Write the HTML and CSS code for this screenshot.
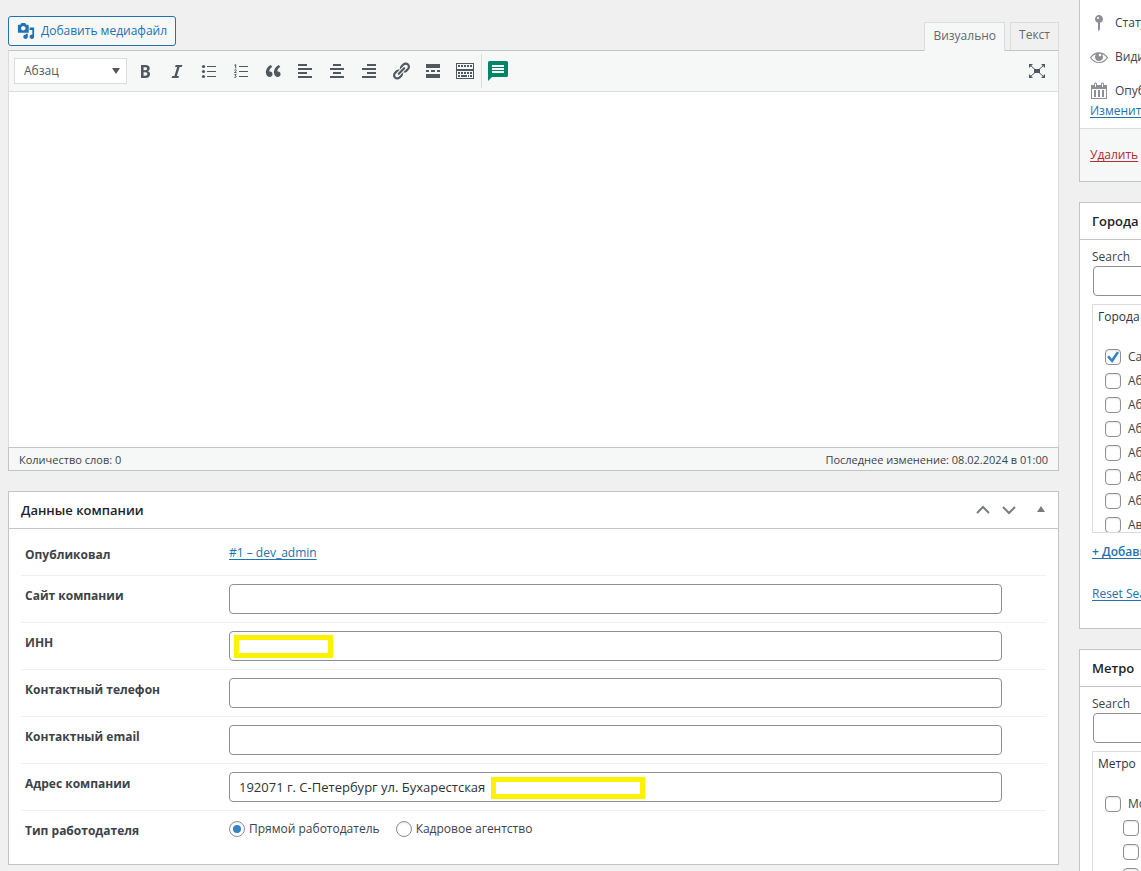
FILE: index.html
```html
<!DOCTYPE html>
<html lang="ru">
<head>
<meta charset="utf-8">
<meta name="viewport" content="width=device-width, initial-scale=1">
<title>Данные компании</title>
<link rel="stylesheet" href="styles.css">
</head>
<body>
<div class="page">
  <main class="main">
    <section class="editor">
      <div class="editor-tools">
        <button type="button" class="media-button">
          <svg class="media-icon" viewBox="0 0 20 20" aria-hidden="true"><path d="M13 11V4c0-.55-.45-1-1-1h-1.67L9 1H5L3.67 3H2c-.55 0-1 .45-1 1v7c0 .55.45 1 1 1h10c.55 0 1-.45 1-1zM7 4.5c1.38 0 2.5 1.12 2.5 2.5S8.38 9.5 7 9.5 4.5 8.38 4.5 7 5.62 4.5 7 4.5zM14 6h5v10.5c0 1.38-1.12 2.5-2.5 2.5S14 17.88 14 16.5s1.12-2.5 2.5-2.5c.17 0 .34.02.5.05V9h-3V6zm-4 8.05V13h2v3.5c0 1.38-1.12 2.5-2.5 2.5S7 17.88 7 16.5 8.12 14 9.5 14c.17 0 .34.02.5.05z"/></svg>
          <span>Добавить медиафайл</span>
        </button>
        <div class="tabs">
          <button type="button" class="tab tab-active">Визуально</button>
          <button type="button" class="tab">Текст</button>
        </div>
      </div>
      <div class="editor-box">
        <div class="toolbar">
          <div class="format">
            <select class="format-select" aria-label="Формат"><option>Абзац</option></select>
            <svg class="format-arrow" viewBox="0 0 8 6" aria-hidden="true"><path d="M0 0h8L4 6z"/></svg>
          </div>
          <button type="button" class="tool" aria-label="Жирный"><svg viewBox="0 0 20 20"><path d="M6 4v13h4.54c1.37 0 2.46-.33 3.26-1 .8-.66 1.2-1.58 1.2-2.77 0-.84-.17-1.51-.51-2.01s-.9-.85-1.67-1.03v-.09c.57-.1 1.02-.4 1.36-.9s.51-1.13.51-1.91c0-1.14-.39-1.98-1.17-2.5C12.75 4.26 11.5 4 9.78 4H6zm2.57 5.15V6.26h1.36c.73 0 1.27.11 1.61.32.34.22.51.58.51 1.07 0 .54-.16.92-.47 1.15s-.82.35-1.51.35h-1.5zm0 2.19h1.6c1.44 0 2.16.53 2.16 1.61 0 .6-.17 1.05-.51 1.34s-.86.43-1.57.43H8.57v-3.38z"/></svg></button>
          <button type="button" class="tool" aria-label="Курсив"><svg viewBox="0 0 20 20"><path d="M14.78 6h-2.13l-2.8 9h2.12l-.62 2H4.6l.62-2h2.14l2.8-9H8.03l.62-2h6.75z"/></svg></button>
          <button type="button" class="tool" aria-label="Маркированный список"><svg viewBox="0 0 20 20"><circle cx="4.5" cy="5.5" r="1.6"/><circle cx="4.5" cy="10.5" r="1.6"/><circle cx="4.5" cy="15.5" r="1.6"/><path d="M8 5h9v1H8zM8 10h9v1H8zM8 15h9v1H8z"/></svg></button>
          <button type="button" class="tool" aria-label="Нумерованный список"><svg viewBox="0 0 20 20"><path d="M8 5h9v1H8zM8 10h9v1H8zM8 15h9v1H8z"/><path class="line" d="M3.5 4.3l1.2-.8v4M3.4 9.2c.6-.8 2-.6 1.9.3 0 .7-1 1.2-1.8 2.1h2M3.4 13.6h1.8l-1 1.2c1.700 0 1.500 2-.8 1.700"/></svg></button>
          <button type="button" class="tool" aria-label="Цитата"><svg viewBox="0 0 20 20"><path d="M9.490 13.220c0-.74-.2-1.38-.61-1.9-.62-.78-1.83-.88-2.53-.72-.29-1.65 1.110-3.75 2.920-4.650L7.880 4c-2.730 1.300-5.420 4.280-4.960 8.050C3.210 14.430 4.590 16 6.540 16c.85 0 1.560-.25 2.120-.75s.83-1.180.83-2.030zm8.050 0c0-.74-.2-1.380-.61-1.900-.63-.78-1.830-.88-2.530-.72-.29-1.650 1.110-3.750 2.920-4.650L15.930 4c-2.730 1.300-5.410 4.280-4.950 8.050.29 2.380 1.660 3.950 3.610 3.950.85 0 1.560-.25 2.120-.75s.83-1.180.83-2.030z"/></svg></button>
          <button type="button" class="tool" aria-label="По левому краю"><svg viewBox="0 0 20 20"><path d="M3 3h9v2H3zM3 7h14v2H3zM3 11h9v2H3zM3 15h14v2H3z"/></svg></button>
          <button type="button" class="tool" aria-label="По центру"><svg viewBox="0 0 20 20"><path d="M6 3h8v2H6zM3 7h14v2H3zM6 11h8v2H6zM3 15h14v2H3z"/></svg></button>
          <button type="button" class="tool" aria-label="По правому краю"><svg viewBox="0 0 20 20"><path d="M8 3h9v2H8zM3 7h14v2H3zM8 11h9v2H8zM3 15h14v2H3z"/></svg></button>
          <button type="button" class="tool" aria-label="Ссылка"><svg viewBox="0 0 20 20"><path d="M17.740 2.760c1.680 1.690 1.680 4.410 0 6.100l-1.530 1.520c-1.120 1.120-2.700 1.470-4.140 1.090l2.620-2.610.76-.77.76-.76c.84-.84.84-2.200 0-3.040-.84-.85-2.200-.85-3.040 0l-.77.76-3.380 3.380c-.37-1.440-.02-3.020 1.100-4.140l1.520-1.530c1.690-1.680 4.420-1.680 6.100 0zM8.590 13.430l5.340-5.340c.42-.42.42-1.100 0-1.520-.44-.43-1.130-.39-1.530 0l-5.330 5.340c-.42.42-.42 1.100 0 1.520.44.43 1.130.39 1.520 0zm-.76 2.290l4.140-4.150c.38 1.440.03 3.020-1.090 4.140l-1.520 1.530c-1.690 1.680-4.410 1.680-6.100 0-1.680-1.680-1.680-4.420 0-6.100l1.530-1.520c1.120-1.120 2.700-1.470 4.140-1.100l-4.140 4.150c-.85.84-.85 2.200 0 3.050.84.84 2.200.84 3.040 0z"/></svg></button>
          <button type="button" class="tool" aria-label="Тег «Далее»"><svg viewBox="0 0 20 20"><path d="M3 3h14v4H3zM3 9h3v2H3zM8 9h4v2H8zM14 9h3v2h-3zM3 13h14v4H3z"/></svg></button>
          <button type="button" class="tool" aria-label="Дополнительная панель"><svg viewBox="0 0 20 20"><path fill-rule="evenodd" d="M1 2h18v7H1zM2 3v5h16V3zM1 9h18v9H1zM2 10v7h16v-7z"/><path d="M3 4h2v2H3zM6 4h2v2H6zM9 4h2v2H9zM12 4h2v2h-2zM15 4h2v2h-2zM3 11h2v2H3zM6 11h2v2H6zM9 11h2v2H9zM12 11h2v2h-2zM15 11h2v2h-2zM3 14h2v2H3zM6 14h6v2H6zM13 14h1v2h-1zM15 14h2v2h-2z"/></svg></button>
          <span class="tool-divider"></span>
          <button type="button" class="tool tool-green" aria-label="Комментарий"><svg viewBox="0 0 20 20"><path fill-rule="evenodd" d="M1.500 0h17A1.500 1.500 0 0 1 20 1.500v13a1.500 1.500 0 0 1-1.500 1.500H4l-4 4V1.500A1.500 1.500 0 0 1 1.500 0zM4 4v2h12V4zM4 7v2h12V7zM4 10v2h12v-2z"/></svg></button>
          <button type="button" class="tool tool-last" aria-label="На весь экран"><svg viewBox="0 0 20 20"><path d="M7 8h6v4H7zM2 3h4L2 7zM18 3h-4l4 4zM2 17h4l-4-4zM18 17h-4l4-4z"/><path class="line" d="M3 4l5 4.500M17 4l-5 4.500M3 16l5-4.500M17 16l-5-4.500"/></svg></button>
        </div>
        <div class="canvas" contenteditable="true" role="textbox" aria-label="Содержимое"></div>
        <div class="statusbar"><span>Количество слов: 0</span><span>Последнее изменение: 08.02.2024 в 01:00</span></div>
      </div>
    </section>

    <section class="card company">
      <header class="card-header">
        <h2>Данные компании</h2>
        <div class="card-actions">
          <button type="button" class="action" aria-label="Вверх"><svg viewBox="0 0 20 20"><path d="M4 13l6-6 6 6"/></svg></button>
          <button type="button" class="action" aria-label="Вниз"><svg viewBox="0 0 20 20"><path d="M4 7l6 6 6-6"/></svg></button>
          <button type="button" class="action action-toggle" aria-label="Свернуть"><svg viewBox="0 0 20 20"><path d="M6 12l4-6 4 6z"/></svg></button>
        </div>
      </header>
      <div class="fields">
        <div class="field field-link"><span class="field-name">Опубликовал</span><div><a href="#">#1 – dev_admin</a></div></div>
        <div class="field"><label class="field-name" for="site">Сайт компании</label><div class="control"><input class="text" id="site" type="text"></div></div>
        <div class="field"><label class="field-name" for="inn">ИНН</label><div class="control"><input class="text" id="inn" type="text"><span class="mark mark-inn"></span></div></div>
        <div class="field"><label class="field-name" for="phone">Контактный телефон</label><div class="control"><input class="text" id="phone" type="text"></div></div>
        <div class="field"><label class="field-name" for="email">Контактный email</label><div class="control"><input class="text" id="email" type="text"></div></div>
        <div class="field"><label class="field-name" for="address">Адрес компании</label><div class="control"><input class="text" id="address" type="text" value="192071 г. С-Петербург ул. Бухарестская"><span class="mark mark-address"></span></div></div>
        <div class="field" role="radiogroup" aria-labelledby="type-name"><span class="field-name" id="type-name">Тип работодателя</span>
          <div class="radios">
            <label><input type="radio" name="type" checked>Прямой работодатель</label>
            <label><input type="radio" name="type">Кадровое агентство</label>
          </div>
        </div>
      </div>
    </section>
  </main>

  <aside class="side">
    <section class="card publish">
      <ul class="publish-list">
        <li><svg viewBox="0 0 20 20" aria-hidden="true"><path d="M14 6c0 1.860-1.280 3.410-3 3.860V16c0 1-2 2-2 2V9.860c-1.720-.45-3-2-3-3.860 0-2.210 1.790-4 4-4s4 1.790 4 4zM8 5c0 .55.45 1 1 1s1-.45 1-1-.45-1-1-1-1 .45-1 1z"/></svg>Статус</li>
        <li><svg viewBox="0 0 20 20" aria-hidden="true"><path d="M18.300 9.500C15 4.900 8.500 3.800 3.900 7.200c-1.200.9-2.200 2.100-3 3.400.2.4.5.8.8 1.200 3.300 4.600 9.600 5.600 14.200 2.400.9-.7 1.700-1.400 2.400-2.400.3-.4.5-.8.8-1.200-.3-.4-.5-.8-.8-1.100zm-8.200-2.300c.5-.5 1.300-.5 1.800 0s.5 1.300 0 1.800-1.300.5-1.800 0-.5-1.300 0-1.800zm-.1 7.700c-3.100 0-6-1.600-7.700-4.200C3.500 9 5.100 7.800 7 7.200c-.7.8-1 1.700-1 2.700 0 2.200 1.700 4.100 4 4.100 2.200 0 4.100-1.700 4.100-4v-.1c0-1-.4-2-1.100-2.700 1.900.6 3.500 1.800 4.700 3.500-1.700 2.600-4.600 4.200-7.700 4.200z"/></svg>Видимость</li>
        <li><svg viewBox="0 0 20 20" aria-hidden="true"><path d="M15 4h3v14H2V4h3V3c0-.83.67-1.500 1.500-1.500S8 2.170 8 3v1h4V3c0-.83.67-1.500 1.500-1.500S15 2.170 15 3v1zM6 3v2.500c0 .28.22.5.5.5s.5-.22.5-.5V3c0-.28-.22-.5-.5-.5S6 2.720 6 3zm7 0v2.500c0 .28.22.5.5.5s.5-.22.5-.5V3c0-.28-.22-.5-.5-.5s-.5.22-.5.5zm4 14V8H3v9h14zM7 16V9H5v7h2zm4 0V9H9v7h2zm4 0V9h-2v7h2z"/></svg>Опубликовано</li>
      </ul>
      <a class="edit-link" href="#">Изменить</a>
      <div class="publish-footer"><a class="delete-link" href="#">Удалить</a></div>
    </section>

    <section class="card taxonomy">
      <header class="card-header"><h2>Города</h2></header>
      <div class="taxonomy-body">
        <label class="search-label" for="city-search">Search</label>
        <input class="text" id="city-search" type="text">
        <div class="terms">
          <div class="terms-title">Города</div>
          <ul>
            <li><label><input type="checkbox" checked>Санкт-Петербург</label></li>
            <li><label><input type="checkbox">Абаза</label></li>
            <li><label><input type="checkbox">Абакан</label></li>
            <li><label><input type="checkbox">Абан</label></li>
            <li><label><input type="checkbox">Абдулино</label></li>
            <li><label><input type="checkbox">Абинск</label></li>
            <li><label><input type="checkbox">Абрау-Дюрсо</label></li>
            <li><label><input type="checkbox">Август</label></li>
          </ul>
        </div>
        <a class="add-link" href="#">+ Добавить</a>
        <a class="reset-link" href="#">Reset Search</a>
      </div>
    </section>

    <section class="card taxonomy">
      <header class="card-header"><h2>Метро</h2></header>
      <div class="taxonomy-body">
        <label class="search-label" for="metro-search">Search</label>
        <input class="text" id="metro-search" type="text">
        <div class="terms">
          <div class="terms-title">Метро</div>
          <ul>
            <li><label><input type="checkbox">Москва</label></li>
            <li class="child"><label><input type="checkbox">Авиамоторная</label></li>
            <li class="child"><label><input type="checkbox">Автозаводская</label></li>
            <li class="child"><label><input type="checkbox">Академическая</label></li>
          </ul>
        </div>
      </div>
    </section>
  </aside>
</div>
</body>
</html>
```
FILE: styles.css
```css
*, *::before, *::after { box-sizing: border-box; }

body {
  margin: 0;
  background: #f0f0f1;
  color: #3c434a;
  font: 12px/20px "Open Sans", "Noto Sans", sans-serif;
}

button, input, select { font: inherit; color: inherit; margin: 0; }
ul { list-style: none; margin: 0; padding: 0; }
a { color: #2271b1; text-underline-offset: 2px; text-decoration-skip-ink: none; }

.page {
  display: grid;
  grid-template-columns: minmax(0, 1fr) 62px;
  gap: 20px;
  height: 100vh;
  padding-left: 8px;
  overflow: hidden;
}

.main { padding-top: 16px; }

/* Editor */
.editor-tools { display: flex; justify-content: space-between; height: 34px; }

.media-button {
  display: flex;
  align-items: center;
  gap: 6px;
  height: 30px;
  padding: 0 8px;
  border: 1px solid #2271b1;
  border-radius: 3px;
  background: #f6f7f7;
  color: #2271b1;
  white-space: nowrap;
}
.media-icon { width: 18px; height: 18px; fill: currentColor; }

.tabs { display: flex; gap: 5px; align-items: flex-end; }
.tab {
  height: 28px;
  padding: 0 8px 3px;
  border: 1px solid #dcdcde;
  border-bottom: 0;
  background: #f0f0f1;
  color: #646970;
}
.tab-active {
  position: relative;
  height: 29px;
  margin-bottom: -1px;
  background: #f6f7f7;
}

.editor-box { border: 1px solid #dcdcde; border-top-color: #c3c4c7; background: #fff; }

.toolbar {
  display: flex;
  align-items: center;
  height: 41px;
  padding: 0 5px;
  border-bottom: 1px solid #dcdcde;
  background: #f6f7f7;
}
.format { position: relative; margin-right: 2px; }
.format-select {
  display: block;
  width: 113px;
  height: 26px;
  padding: 0 9px;
  border: 1px solid #dcdcde;
  border-radius: 0;
  background: #fff;
  color: #50575e;
  appearance: none;
}
.format-arrow {
  position: absolute;
  top: 10px;
  right: 7px;
  width: 8px;
  height: 6px;
  fill: #50575e;
  pointer-events: none;
}
.tool {
  display: flex;
  align-items: center;
  justify-content: center;
  width: 32px;
  height: 30px;
  padding: 0;
  border: 0;
  background: none;
}
.tool svg { width: 20px; height: 20px; fill: #50575e; }
.tool .line { fill: none; stroke: #50575e; stroke-width: 1; }
.tool-green svg { fill: #008567; }
.tool-divider { width: 1px; height: 34px; background: #dcdcde; }
.tool-last { margin-left: auto; }

.canvas { height: 355px; outline: 0; }

.statusbar {
  display: flex;
  justify-content: space-between;
  margin: 0 -1px -1px;
  padding: 2px 10px 0;
  border: 1px solid #c3c4c7;
  background: #f6f7f7;
  font-size: 11px;
}

/* Cards */
.card { border: 1px solid #c3c4c7; background: #fff; }
.card-header {
  display: flex;
  align-items: center;
  justify-content: space-between;
  height: 37px;
  padding: 0 12px;
  border-bottom: 1px solid #c3c4c7;
}
.card-header h2 { margin: 0; color: #1d2327; font-size: 13px; font-weight: 600; }

.company { margin-top: 20px; }
.card-actions { display: flex; gap: 6px; margin-right: -5px; }
.action { padding: 0; border: 0; background: none; }
.action svg { display: block; width: 20px; height: 20px; fill: none; stroke: #787c82; stroke-width: 2; }
.action-toggle { margin-left: 6px; }
.action-toggle svg { fill: #787c82; stroke: none; }

.fields { padding: 0 12px 6px; }
.field {
  display: grid;
  grid-template-columns: 204px minmax(0, 1fr);
  min-height: 47px;
  padding: 8px 44px 8px 4px;
  border-bottom: 1px solid #f0f0f1;
}
.field:last-child { border-bottom: 0; }
.field-name { padding-top: 2px; font-weight: 700; }
.field-link { padding-top: 14px; }
.control { position: relative; }

.text {
  display: block;
  width: 100%;
  height: 30px;
  padding: 0 9px;
  border: 1px solid #8c8f94;
  border-radius: 4px;
  background: #fff;
  color: #2c3338;
  font-size: 13px;
}

.mark { position: absolute; border: 5px solid #fff200; background: #fff; pointer-events: none; }
.mark-inn { top: 4px; left: 5px; width: 99px; height: 23px; }
.mark-address { top: 5px; left: 262px; width: 154px; height: 22px; }

.radios { display: flex; gap: 16px; }
.radios label { display: flex; align-items: center; gap: 4px; height: 20px; }

input[type="radio"], input[type="checkbox"] {
  flex: none;
  display: grid;
  place-items: center;
  width: 16px;
  height: 16px;
  border: 1px solid #8c8f94;
  background: #fff;
  box-shadow: inset 0 1px 2px rgba(0, 0, 0, 0.1);
  appearance: none;
}
input[type="radio"] { border-radius: 50%; }
input[type="checkbox"] { border-radius: 4px; }
input[type="radio"]:checked::before {
  content: "";
  width: 8px;
  height: 8px;
  border-radius: 50%;
  background: #3582c4;
}
input[type="checkbox"]:checked::before {
  content: "";
  width: 12px;
  height: 12px;
  background: #3582c4;
  clip-path: polygon(0 50%, 18% 38%, 40% 64%, 82% 4%, 100% 14%, 44% 100%);
}

/* Side column */
.side { white-space: nowrap; }
.side .card { width: 280px; }

.publish { border-top: 0; }
.publish-list { padding: 6px 9px 0; }
.publish-list li { display: flex; align-items: center; gap: 6px; height: 34px; }
.publish-list svg { width: 20px; height: 20px; fill: #8c8f94; }
.edit-link { display: block; margin: -7px 10px 7px; }
.publish-footer { padding: 16px 10px; border-top: 1px solid #dcdcde; background: #f6f7f7; }
.delete-link { color: #b32d2e; }

.taxonomy { margin-top: 20px; }
.taxonomy-body { padding: 8px 12px 24px; }
.search-label { display: block; line-height: 18px; }
.taxonomy .text { margin-left: 1px; }
.terms {
  height: 229px;
  margin-top: 8px;
  border: 1px solid #dcdcde;
  overflow: hidden;
}
.terms-title { padding: 2px 5px 18px; color: #2c3338; }
.terms ul { padding-left: 12px; }
.terms li { height: 24px; }
.terms .child { padding-left: 18px; }
.terms label { display: flex; align-items: center; gap: 7px; height: 24px; }
.add-link { display: block; margin-top: 9px; font-weight: 600; }
.reset-link { display: block; margin-top: 22px; }
```
